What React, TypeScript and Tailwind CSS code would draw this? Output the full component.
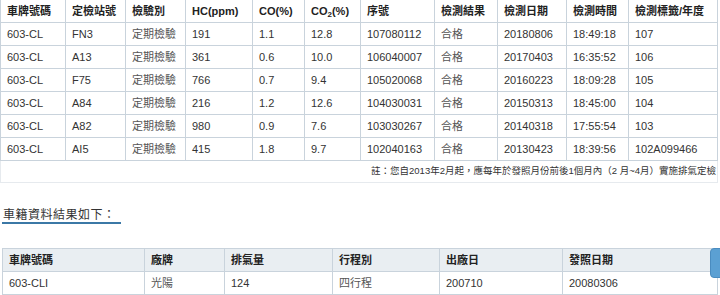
import React from "react";

const headers = ["車牌號碼", "定檢站號", "檢驗別", "HC(ppm)", "CO(%)", "CO2", "序號", "檢測結果", "檢測日期", "檢測時間", "檢測標籤/年度"];
const widths = [65, 60, 60, 67, 52, 56, 74, 63, 69, 62, 89];
const rows = [
  ["603-CL", "FN3", "定期檢驗", "191", "1.1", "12.8", "107080112", "合格", "20180806", "18:49:18", "107"],
  ["603-CL", "A13", "定期檢驗", "361", "0.6", "10.0", "106040007", "合格", "20170403", "16:35:52", "106"],
  ["603-CL", "F75", "定期檢驗", "766", "0.7", "9.4", "105020068", "合格", "20160223", "18:09:28", "105"],
  ["603-CL", "A84", "定期檢驗", "216", "1.2", "12.6", "104030031", "合格", "20150313", "18:45:00", "104"],
  ["603-CL", "A82", "定期檢驗", "980", "0.9", "7.6", "103030267", "合格", "20140318", "17:55:54", "103"],
  ["603-CL", "AI5", "定期檢驗", "415", "1.8", "9.7", "102040163", "合格", "20130423", "18:39:56", "102A099466"],
];

const h2 = ["車牌號碼", "廠牌", "排氣量", "行程別", "出廠日", "發照日期"];
const w2 = [142, 80, 108, 107, 123, 155];
const r2 = ["603-CLI", "光陽", "124", "四行程", "200710", "20080306"];

const font = { fontFamily: '"Liberation Sans", Arial, "Noto Sans CJK TC", sans-serif' };

export default function App() {
  return (
    <div className="relative w-[720px] h-[295px] overflow-hidden bg-white text-[#333]" style={font}>
      <table className="border-collapse table-fixed text-[11px] w-[718px] -mt-px">
        <colgroup>
          {widths.map((w, i) => (
            <col key={i} style={{ width: w }} />
          ))}
        </colgroup>
        <thead>
          <tr>
            {headers.map((h, i) => (
              <th key={i} className="border border-[#c9d3dc] h-[23px] px-[6px] text-left font-bold text-[#222] whitespace-nowrap">
                {h === "CO2" ? (
                  <span>
                    CO<sub className="text-[8px]">2</sub>(%)
                  </span>
                ) : (
                  h
                )}
              </th>
            ))}
          </tr>
        </thead>
        <tbody>
          {rows.map((r, ri) => (
            <tr key={ri}>
              {r.map((c, ci) => (
                <td
                  key={ci}
                  className={`border border-[#c9d3dc] h-[23px] px-[6px] whitespace-nowrap ${ci === 2 || ci === 7 ? "text-[#555]" : "text-[#333]"}`}
                >
                  {c}
                </td>
              ))}
            </tr>
          ))}
          <tr>
            <td colSpan={11} className="border border-[#e6eaee] h-[22px] pr-[1px] text-right whitespace-nowrap text-[9.5px] text-[#333]">
              註：您自2013年2月起，應每年於發照月份前後1個月內（2 月~4月）實施排氣定檢
            </td>
          </tr>
        </tbody>
      </table>

      <div className="mt-[25px] ml-[2px] inline-block border-b-2 border-[#3b78a6] pr-[5px] pl-[1px] text-[12px] leading-[14px] tracking-[0.5px] text-[#333]">
        車籍資料結果如下：
      </div>

      <table className="border-collapse table-fixed text-[11px] w-[716px] ml-[2px] mt-[22px]">
        <colgroup>
          {w2.map((w, i) => (
            <col key={i} style={{ width: w }} />
          ))}
        </colgroup>
        <thead>
          <tr>
            {h2.map((h, i) => (
              <th key={i} className="border border-[#c9d3dc] bg-[#e9eef2] h-[23px] px-[6px] text-left font-bold text-[#222]">
                {h}
              </th>
            ))}
          </tr>
        </thead>
        <tbody>
          <tr>
            {r2.map((c, i) => (
              <td key={i} className={`border border-[#c9d3dc] h-[23px] px-[6px] ${i === 1 || i === 3 ? "text-[#555]" : "text-[#333]"}`}>
                {c}
              </td>
            ))}
          </tr>
        </tbody>
      </table>

      <div className="absolute left-[710px] top-[248px] w-[20px] h-[30px] rounded-l-[4px] bg-[#5ba0d3] border border-[#4a8cc0]" />
    </div>
  );
}
